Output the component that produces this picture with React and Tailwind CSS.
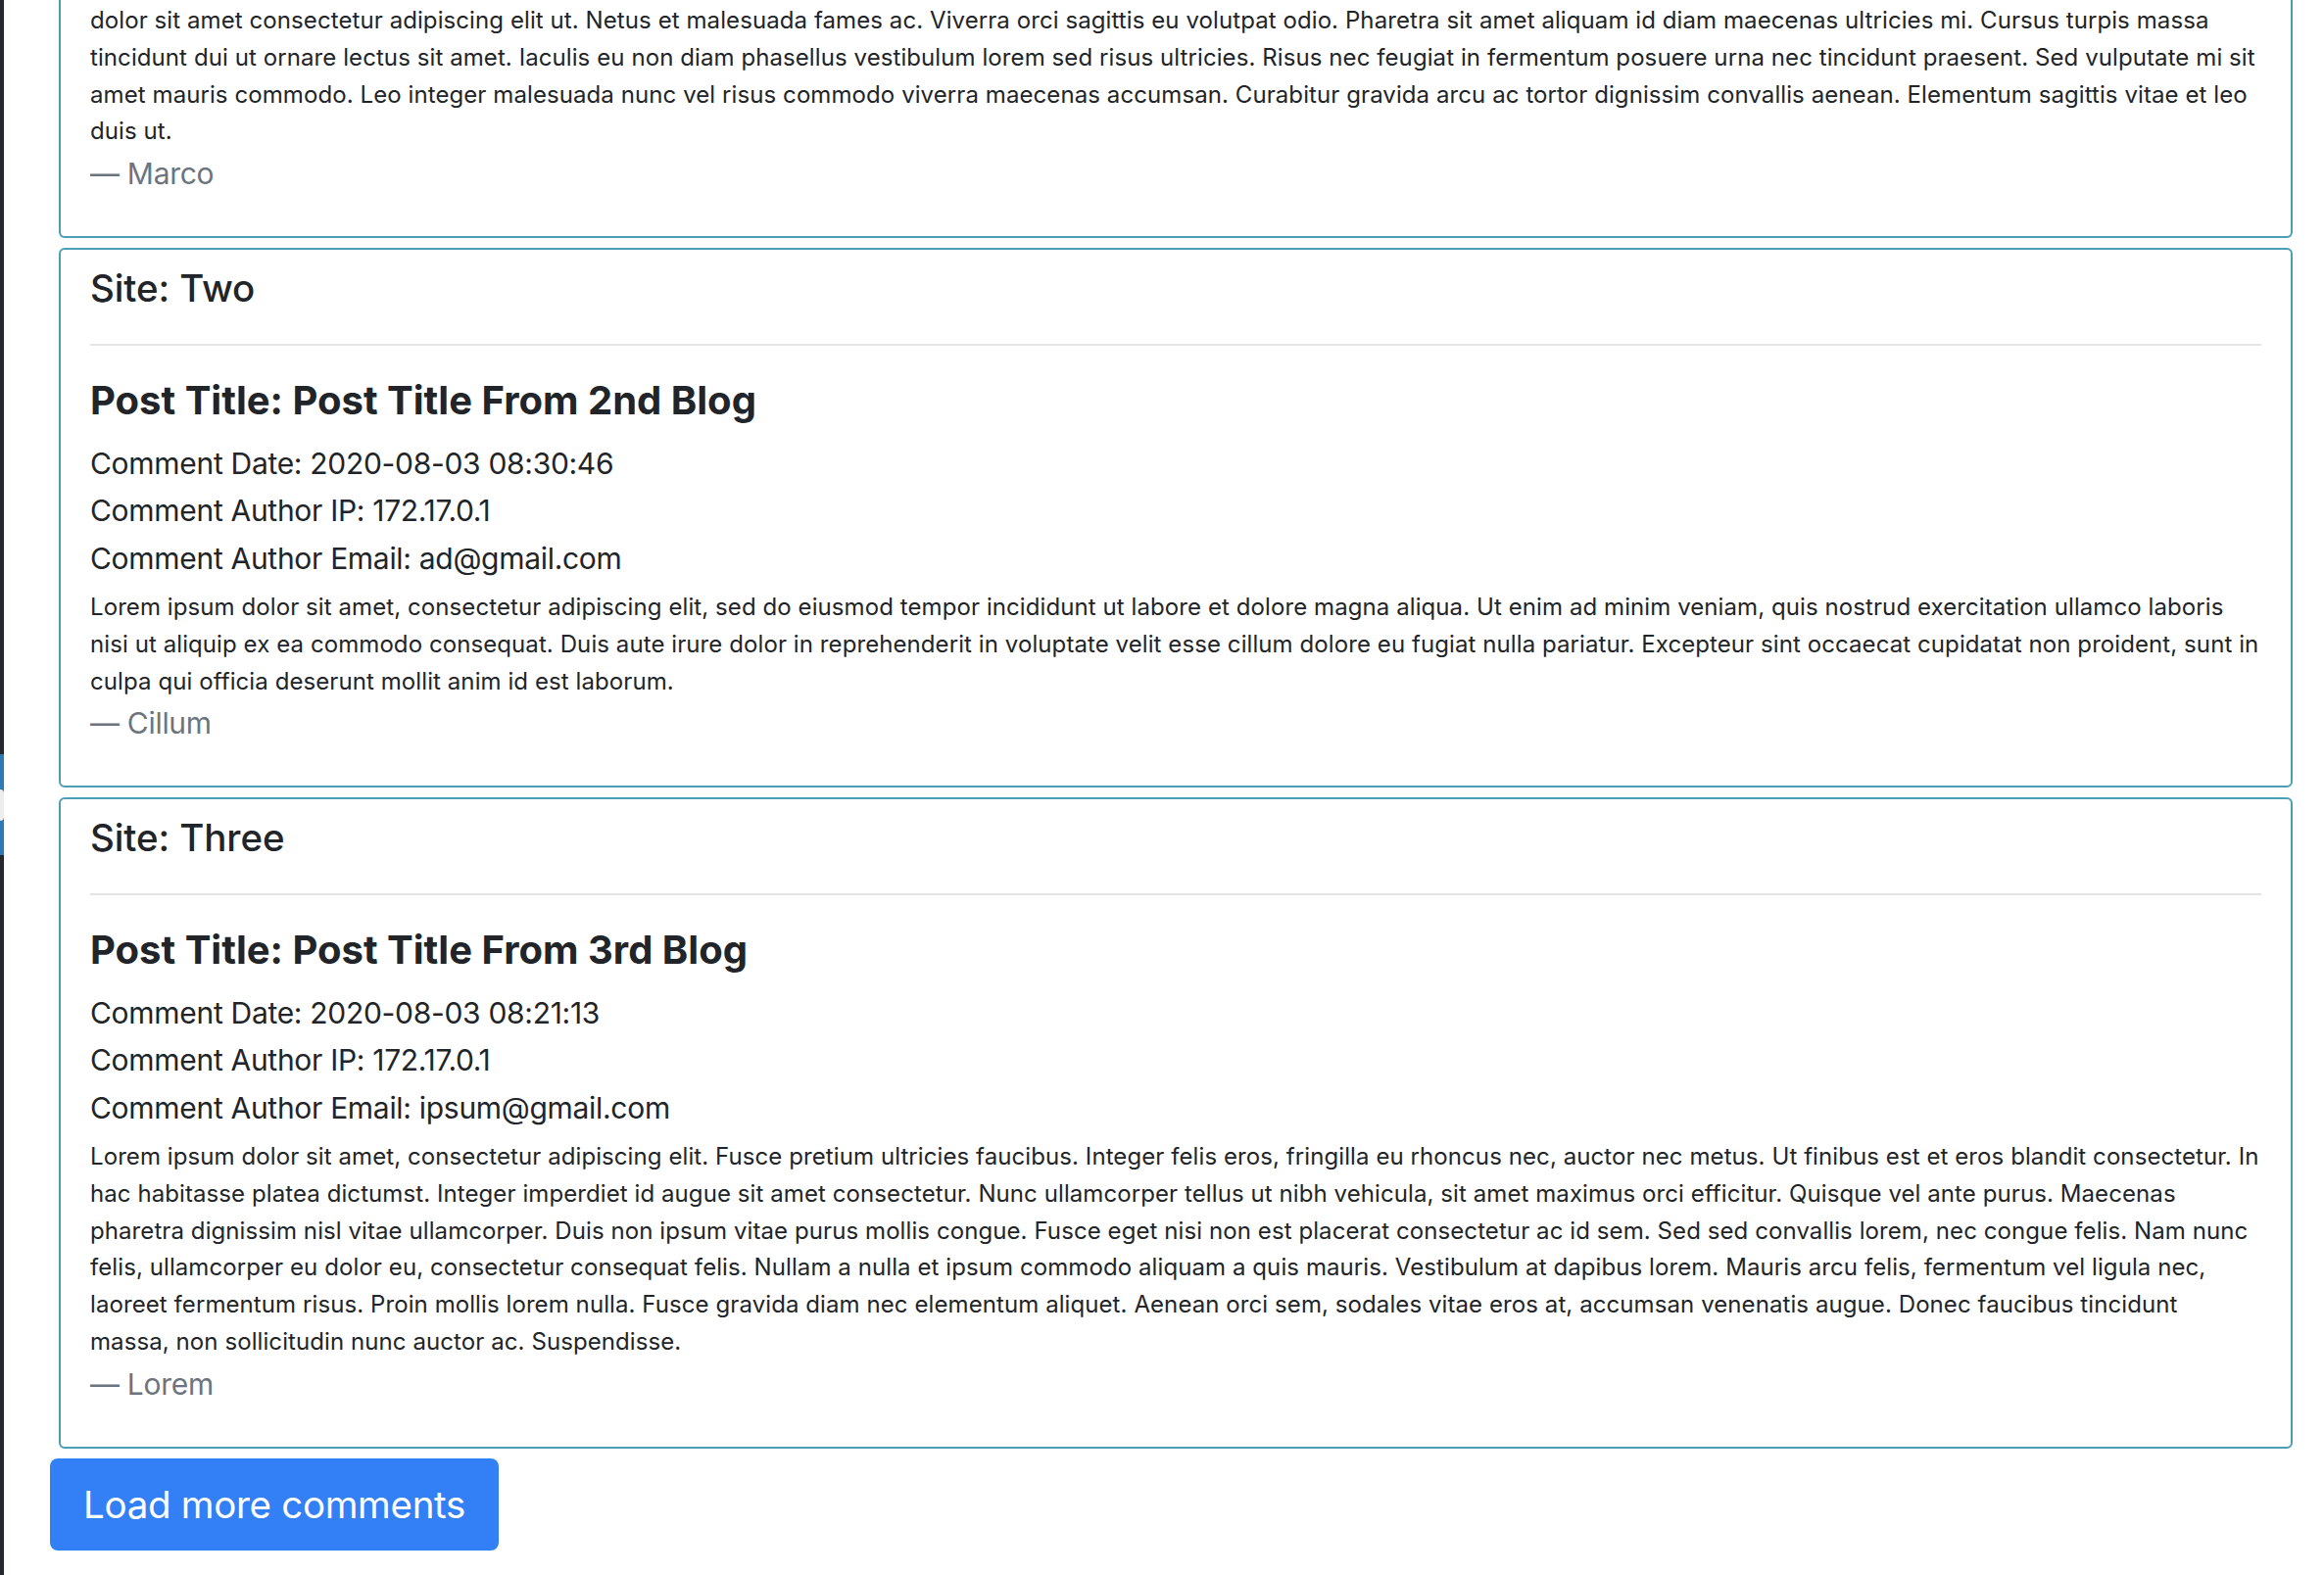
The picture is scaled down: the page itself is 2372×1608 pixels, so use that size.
const comments = [
  {
    site: "Two",
    title: "Post Title From 2nd Blog",
    date: "2020-08-03 08:30:46",
    ip: "172.17.0.1",
    email: "ad@gmail.com",
    body: "Lorem ipsum dolor sit amet, consectetur adipiscing elit, sed do eiusmod tempor incididunt ut labore et dolore magna aliqua. Ut enim ad minim veniam, quis nostrud exercitation ullamco laboris nisi ut aliquip ex ea commodo consequat. Duis aute irure dolor in reprehenderit in voluptate velit esse cillum dolore eu fugiat nulla pariatur. Excepteur sint occaecat cupidatat non proident, sunt in culpa qui officia deserunt mollit anim id est laborum.",
    author: "Cillum",
  },
  {
    site: "Three",
    title: "Post Title From 3rd Blog",
    date: "2020-08-03 08:21:13",
    ip: "172.17.0.1",
    email: "ipsum@gmail.com",
    body: "Lorem ipsum dolor sit amet, consectetur adipiscing elit. Fusce pretium ultricies faucibus. Integer felis eros, fringilla eu rhoncus nec, auctor nec metus. Ut finibus est et eros blandit consectetur. In hac habitasse platea dictumst. Integer imperdiet id augue sit amet consectetur. Nunc ullamcorper tellus ut nibh vehicula, sit amet maximus orci efficitur. Quisque vel ante purus. Maecenas pharetra dignissim nisl vitae ullamcorper. Duis non ipsum vitae purus mollis congue. Fusce eget nisi non est placerat consectetur ac id sem. Sed sed convallis lorem, nec congue felis. Nam nunc felis, ullamcorper eu dolor eu, consectetur consequat felis. Nullam a nulla et ipsum commodo aliquam a quis mauris. Vestibulum at dapibus lorem. Mauris arcu felis, fermentum vel ligula nec, laoreet fermentum risus. Proin mollis lorem nulla. Fusce gravida diam nec elementum aliquet. Aenean orci sem, sodales vitae eros at, accumsan venenatis augue. Donec faucibus tincidunt massa, non sollicitudin nunc auctor ac. Suspendisse.",
    author: "Lorem",
  },
];

const firstTail =
  "dolor sit amet consectetur adipiscing elit ut. Netus et malesuada fames ac. Viverra orci sagittis eu volutpat odio. Pharetra sit amet aliquam id diam maecenas ultricies mi. Cursus turpis massa tincidunt dui ut ornare lectus sit amet. Iaculis eu non diam phasellus vestibulum lorem sed risus ultricies. Risus nec feugiat in fermentum posuere urna nec tincidunt praesent. Sed vulputate mi sit amet mauris commodo. Leo integer malesuada nunc vel risus commodo viverra maecenas accumsan. Curabitur gravida arcu ac tortor dignissim convallis aenean. Elementum sagittis vitae et leo duis ut.";

function Quote({ text, author }) {
  return (
    <blockquote>
      <p className="text-[24px] leading-[37.8px] tracking-[0.085px]">{text}</p>
      <footer className="mt-[6px] text-[30px] leading-[36px] text-[#6c757d] tracking-[-0.3px]">
        &mdash; {author}
      </footer>
    </blockquote>
  );
}

function CommentCard({ c }) {
  return (
    <div className="ml-[9px] mb-[10px] rounded-[6px] border-2 border-[#4a9fb5] px-[30px] pt-[16.5px] pb-[46px]">
      <h4 className="text-[38.5px] leading-[44px] font-medium tracking-[-0.1px]">Site: {c.site}</h4>
      <hr className="mt-[35px] border-t-2 border-[#e4e4e4]" />
      <h4 className="mt-[35px] text-[40px] leading-[42px] font-bold">
        Post Title: {c.title}
      </h4>
      <div className="mt-[19px] text-[30px] leading-[48.4px] tracking-[-0.3px]">
        <div>Comment Date: {c.date}</div>
        <div>Comment Author IP: {c.ip}</div>
        <div>Comment Author Email: {c.email}</div>
      </div>
      <div className="mt-[7px]">
        <Quote text={c.body} author={c.author} />
      </div>
    </div>
  );
}

export default function App() {
  return (
    <div className="flex min-h-[1608px] bg-white text-[#212529] font-['Inter',sans-serif]">
      {/* dark edge of the side panel */}
      <div className="flex w-[4px] shrink-0 flex-col bg-[#25282c]">
        <div className="h-[770px]" />
        <div className="flex h-[103px] flex-col justify-center bg-[#2f79b4]">
          <div className="h-[32px] rounded-r-full bg-[#ededed]" />
        </div>
      </div>

      <main className="flex-1 pl-[47px] pr-[32px]">
        <div className="ml-[9px] mb-[10px] rounded-b-[6px] border-x-2 border-b-2 border-[#4a9fb5] px-[30px] pt-[2px] pb-[46px]">
          <Quote text={firstTail} author="Marco" />
        </div>

        {comments.map((c) => (
          <CommentCard key={c.site} c={c} />
        ))}

        <button className="h-[94px] rounded-[8px] bg-[#3380f6] px-[34px] text-[38.5px] leading-none text-white tracking-[-0.3px]">
          Load more comments
        </button>
      </main>
    </div>
  );
}
